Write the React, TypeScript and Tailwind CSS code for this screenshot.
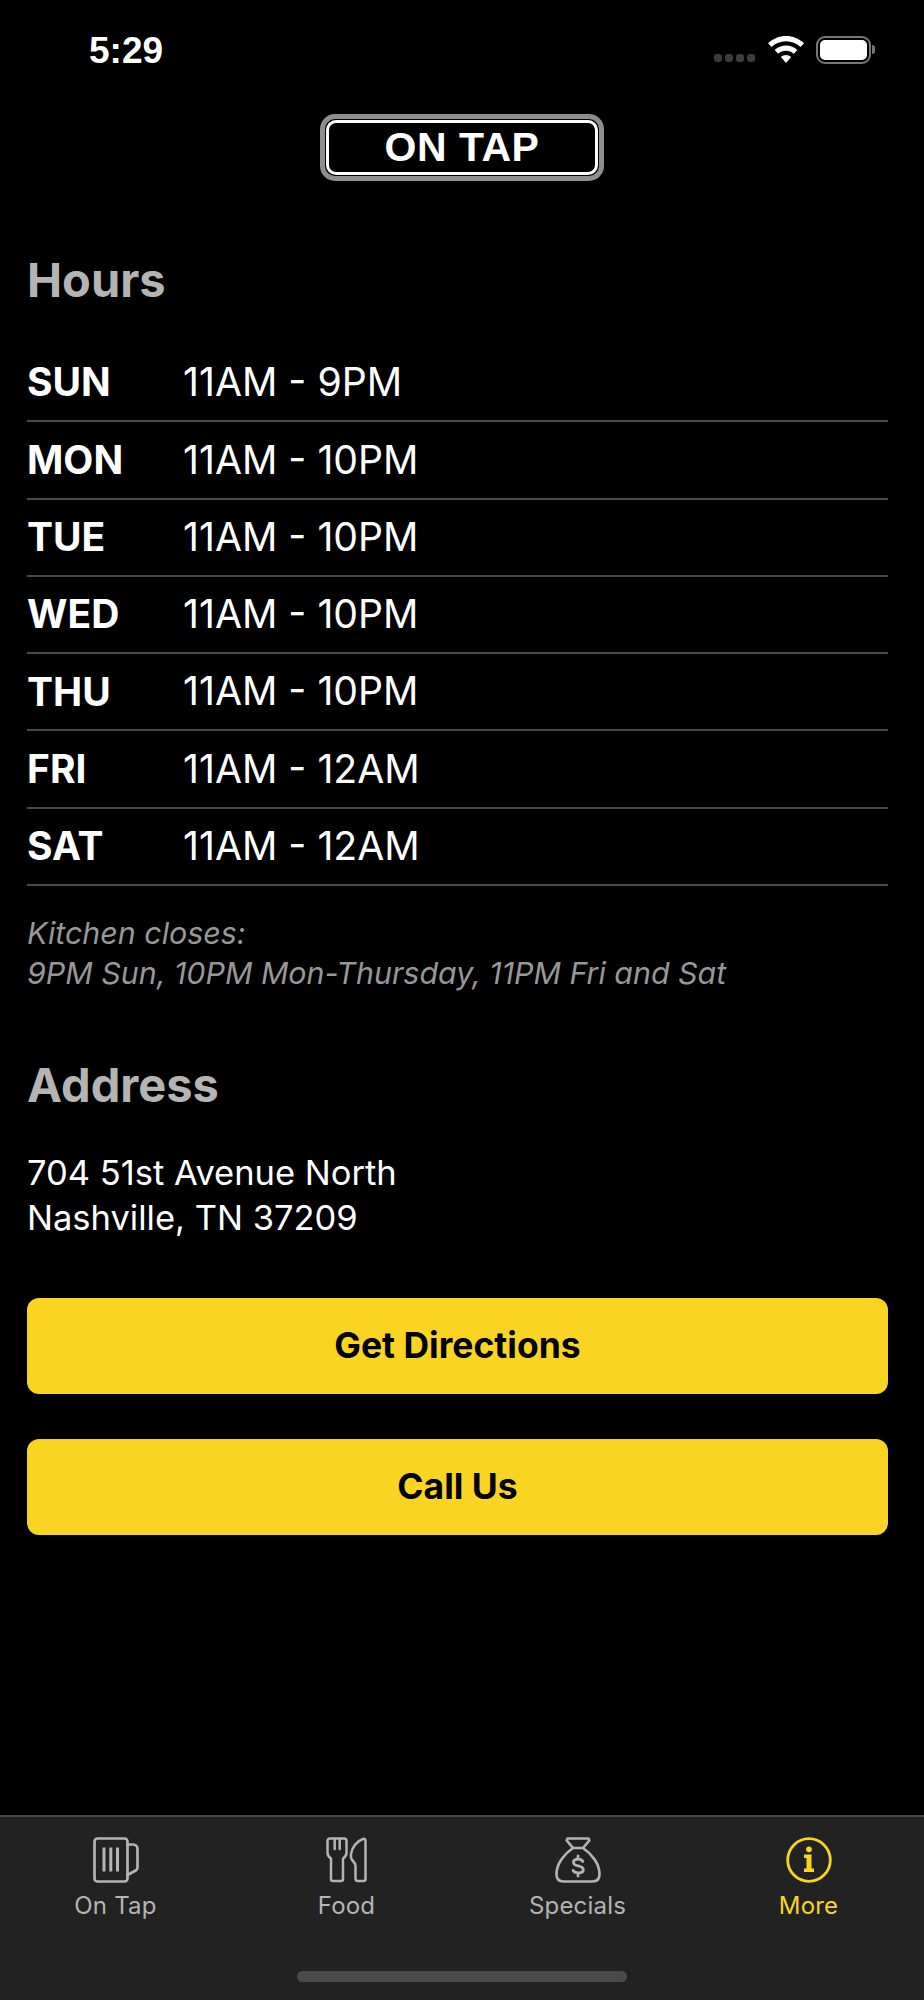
import type { ReactNode } from 'react';

const HOURS = [
  ['SUN', '11AM - 9PM'],
  ['MON', '11AM - 10PM'],
  ['TUE', '11AM - 10PM'],
  ['WED', '11AM - 10PM'],
  ['THU', '11AM - 10PM'],
  ['FRI', '11AM - 12AM'],
  ['SAT', '11AM - 12AM'],
];

function BeerIcon() {
  return (
    <svg width="46" height="46" viewBox="0 0 46 46" fill="none" stroke="currentColor" strokeWidth="2.7" strokeLinejoin="round" strokeLinecap="round">
      <rect x="1.5" y="1.5" width="33" height="43" rx="3" />
      <path d="M34.5 7.500h5.500a4.500 4.500 0 0 1 4.500 4.500v18.500a3.500 3.500 0 0 1-1.800 3L34.500 38" />
      <path d="M11 10.500v24M17.800 10.500v24M24.500 10.500v24" strokeWidth="3" strokeLinecap="butt" />
    </svg>
  );
}

function FoodIcon() {
  return (
    <svg width="41" height="46" viewBox="0 0 41 46" fill="none" stroke="currentColor" strokeWidth="2.5" strokeLinejoin="round" strokeLinecap="round">
      <path d="M1.500 4v11a7 7 0 0 0 3.500 6.500V42a2 2 0 0 0 2 2h8a2 2 0 0 0 2-2V21.500a7 7 0 0 0 3.500-6.500V4a2.500 2.500 0 0 0-2.500-2.500H4A2.500 2.500 0 0 0 1.500 4Z" />
      <path d="M8.700 2v10M13.700 2v10" />
      <path d="M39.500 3.500V42a2 2 0 0 1-2 2H32a2.500 2.500 0 0 1-2.500-2.500V29c0-2-1-3.500-2.500-5-2-2-2.500-4-2-7C26 10 31 4 37 2c1.500-.5 2.500 0 2.500 1.500Z" />
    </svg>
  );
}

function BagIcon() {
  return (
    <svg width="46" height="46" viewBox="0 0 46 46" fill="none" stroke="currentColor" strokeWidth="2.7" strokeLinejoin="round" strokeLinecap="round">
      <path d="M12.500 1.500h21l.8 2L28 11H18L11.700 3.500Z" />
      <path d="M18 11C9 17 1.500 27 1.500 37c0 5 2.500 7.500 7 7.500h29c4.500 0 7-2.500 7-7.500 0-10-7.500-20-16.500-26" />
      <path d="M27.800 24.500c-.7-1.300-2.400-2.300-4.600-2.300-2.700 0-4.700 1.200-4.700 3.200 0 4.600 9.800 2.500 9.800 7.300 0 2.100-2.100 3.200-5.100 3.200-2.200 0-4.300-.9-5.100-2.500M23 19v3M23 36v3" strokeWidth="2.800" />
    </svg>
  );
}

function InfoIcon() {
  return (
    <svg width="46" height="46" viewBox="0 0 46 46" fill="none">
      <circle cx="23" cy="23" r="21.300" stroke="currentColor" strokeWidth="2.800" />
      <circle cx="23" cy="12.300" r="2.900" fill="currentColor" />
      <path d="M18 17.500h7.500v14h2.500V35H18v-3.500h2.500v-10.500H18Z" fill="currentColor" />
    </svg>
  );
}

function WifiIcon() {
  return (
    <svg width="36" height="28" viewBox="0 0 36 28" fill="#fff">
      <path d="M18 0C11 0 5 2.700 0 7.200l3.500 3.800C7.500 7.300 12.500 5.200 18 5.200s10.500 2.100 14.500 5.800L36 7.200C31 2.700 25 0 18 0Z" />
      <path d="M18 9.500c-4.300 0-8.300 1.700-11.300 4.500l3.500 3.700c2-1.900 4.800-3 7.800-3s5.800 1.100 7.800 3l3.500-3.700c-3-2.800-7-4.500-11.300-4.500Z" />
      <path d="M18 19c-2 0-3.800.8-5.100 2L18 27l5.100-6c-1.300-1.200-3.100-2-5.100-2Z" />
    </svg>
  );
}

function Tab({ icon, label, active }: { icon: ReactNode; label: string; active?: boolean }) {
  return (
    <div className={`flex flex-col items-center ${active ? 'text-[#f9d423]' : 'text-[#b4b4b4]'}`}>
      {icon}
      <span className="mt-[8px] text-[24px] leading-[30px] tracking-[0.2px]">{label}</span>
    </div>
  );
}

export default function App() {
  return (
    <div className="w-[924px] h-[2000px] bg-black text-white flex flex-col font-['Inter','Noto_Sans',sans-serif]">
      {/* status bar */}
      <div className="h-[114px] shrink-0 flex justify-between pl-[89px] pr-[49px] pt-[29px]">
        <span className="text-[37px] leading-[44px] font-bold font-['Liberation_Sans',sans-serif]">5:29</span>
        <div className="flex items-start pt-[7px]">
          <div className="flex gap-[3px] mt-[18px] mr-[13px]">
            <span className="w-[8px] h-[8px] rounded-[3px] bg-[#3c3c3c]" />
            <span className="w-[8px] h-[8px] rounded-[3px] bg-[#3c3c3c]" />
            <span className="w-[8px] h-[8px] rounded-[3px] bg-[#3c3c3c]" />
            <span className="w-[8px] h-[8px] rounded-[3px] bg-[#3c3c3c]" />
          </div>
          <WifiIcon />
          <div className="ml-[12px] w-[55px] h-[28px] rounded-[9px] border-[2px] border-[#777] p-[2px]">
            <div className="w-full h-full rounded-[5px] bg-white" />
          </div>
          <span className="w-[3px] h-[9px] mt-[9px] ml-[1px] rounded-r-full bg-[#777]" />
        </div>
      </div>

      {/* logo */}
      <div className="flex justify-center">
        <div className="w-[284px] h-[67px] rounded-[15px] border-[5px] border-[#8e8e8e] p-[1px]">
          <div className="w-full h-full rounded-[10px] border-[3px] border-white flex items-center justify-center">
            <span className="text-[41px] leading-none font-bold tracking-[0.5px] font-['Liberation_Sans',sans-serif]">ON TAP</span>
          </div>
        </div>
      </div>

      {/* hours */}
      <div className="pl-[27px] pr-[36px] flex flex-col">
        <h2 className="mt-[74px] text-[47px] leading-[50px] font-bold text-[#b4b4b4]">Hours</h2>
        <div className="mt-[40px] flex flex-col">
          {HOURS.map(([day, time]) => (
            <div key={day} className="h-[77.300px] flex items-center border-b-[2px] border-[#4a4a4a]">
              <span className="w-[156px] text-[39px] font-bold">{day}</span>
              <span className="text-[39.200px]">{time}</span>
            </div>
          ))}
        </div>
        <p className="mt-[27px] text-[30.400px] leading-[40px] italic text-[#979797]">
          Kitchen closes:
          <br />
          9PM Sun, 10PM Mon-Thursday, 11PM Fri and Sat
        </p>

        <h2 className="mt-[67px] text-[47px] leading-[50px] font-bold text-[#b4b4b4]">Address</h2>
        <p className="mt-[40px] text-[34.500px] leading-[45px]">
          704 51st Avenue North
          <br />
          Nashville, TN 37209
        </p>

        <button type="button" className="mt-[58px] h-[96px] rounded-[12px] bg-[#f9d423] text-black text-[35.500px] font-bold">
          Get Directions
        </button>
        <button type="button" className="mt-[45px] h-[96px] rounded-[12px] bg-[#f9d423] text-black text-[35.500px] font-bold">
          Call Us
        </button>
      </div>

      {/* tab bar */}
      <div className="mt-auto relative h-[185px] shrink-0 bg-[#222222] border-t-[2px] border-[#4a4a4a]">
        <div className="grid grid-cols-4 pt-[20px]">
          <Tab icon={<BeerIcon />} label="On Tap" />
          <Tab icon={<FoodIcon />} label="Food" />
          <Tab icon={<BagIcon />} label="Specials" />
          <Tab icon={<InfoIcon />} label="More" active />
        </div>
        <div className="absolute left-[297px] top-[154px] w-[330px] h-[11px] rounded-full bg-[#4a4a4a]" />
      </div>
    </div>
  );
}
